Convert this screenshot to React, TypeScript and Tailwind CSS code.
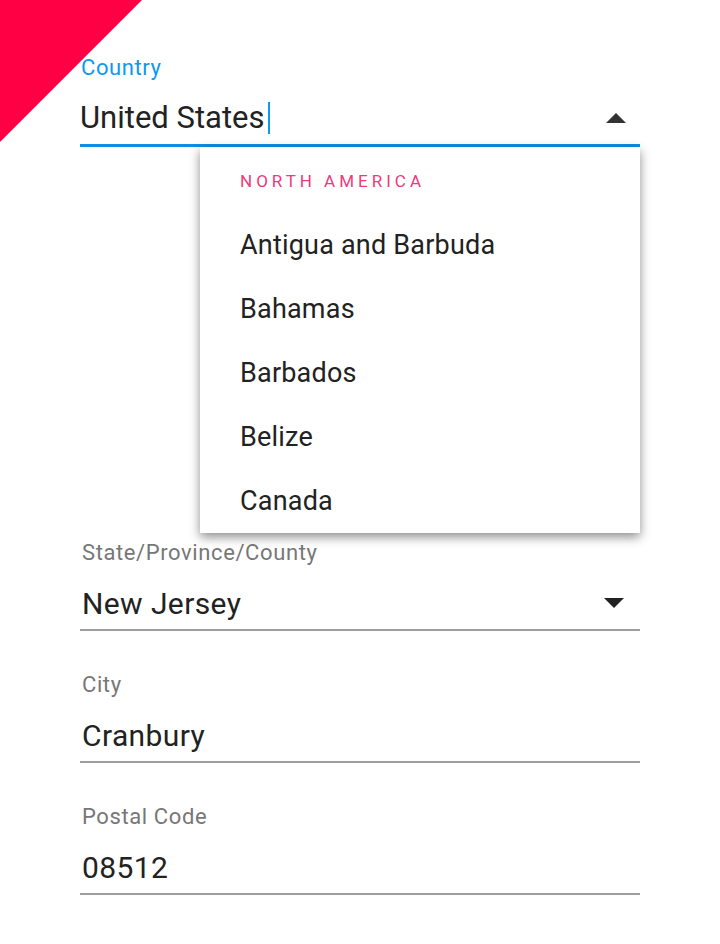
import { useState } from 'react';

const northAmerica = ['Antigua and Barbuda', 'Bahamas', 'Barbados', 'Belize', 'Canada'];

const ArrowUp = () => (
  <svg width="20" height="10" viewBox="0 0 20 10">
    <path d="M0 10 L10 0 L20 10 Z" fill="#333" />
  </svg>
);

const ArrowDown = () => (
  <svg width="20" height="10" viewBox="0 0 20 10">
    <path d="M0 0 L10 10 L20 0 Z" fill="#222" />
  </svg>
);

interface FieldProps {
  label: string;
  value: string;
  select?: boolean;
}

// plain text field with a grey underline
const Field = ({ label, value, select }: FieldProps) => (
  <div className="flex flex-col">
    <label className="pl-[2px] text-[22px] leading-[26px] tracking-[0.6px] text-[#777]">{label}</label>
    <div className="mt-[17px] flex h-[40px] items-center justify-between">
      <span className="pl-[2px] text-[30px] tracking-[0.4px] text-[#222]">{value}</span>
      {select && (
        <span className="mr-[16px] flex">
          <ArrowDown />
        </span>
      )}
    </div>
    <div className="mt-[6px] h-[2px] bg-[#9e9e9e]" />
  </div>
);

const App = () => {
  const [country] = useState('United States');

  return (
    <div
      className="relative min-h-[944px] w-[720px] overflow-hidden bg-white"
      style={{ fontFamily: 'Roboto, "Noto Sans", sans-serif' }}
    >
      {/* corner ribbon */}
      <div className="absolute left-0 top-0 h-[142px] w-[142px] bg-[#ff0044] [clip-path:polygon(0_0,100%_0,0_100%)]" />

      <div className="relative flex flex-col px-[80px] pt-[55px]">
        {/* Country (open) */}
        <div className="relative flex flex-col">
          <label className="pl-[1px] text-[22px] leading-[26px] tracking-[0.6px] text-[#0a9af0]">Country</label>
          <div className="mt-[17px] flex h-[40px] items-center justify-between">
            <span className="flex items-center text-[31px] text-[#222]">
              {country}
              <span className="ml-[3px] inline-block h-[32px] w-[2px] bg-[#0a9af0]" />
            </span>
            <span className="mr-[14px] flex">
              <ArrowUp />
            </span>
          </div>
          <div className="mt-[6px] h-[3px] bg-[#0a90e8]" />

          <div className="absolute left-[120px] right-0 top-full z-10 bg-white shadow-[0_4px_10px_rgba(0,0,0,0.45)]">
            <div className="pl-[40px] pt-[22px] text-[17px] leading-[24px] tracking-[4px] text-[#ec3a7c]">
              NORTH AMERICA
            </div>
            <ul className="mt-[20px] flex flex-col">
              {northAmerica.map(name => (
                <li key={name} className="flex h-[64px] items-center pl-[40px] text-[27px] tracking-[0.2px] text-[#222]">
                  {name}
                </li>
              ))}
            </ul>
          </div>
        </div>

        <div className="mt-[393px] flex flex-col gap-[41px]">
          <Field label="State/Province/County" value="New Jersey" select />
          <Field label="City" value="Cranbury" />
          <Field label="Postal Code" value="08512" />
        </div>
      </div>
    </div>
  );
};

export default App;
